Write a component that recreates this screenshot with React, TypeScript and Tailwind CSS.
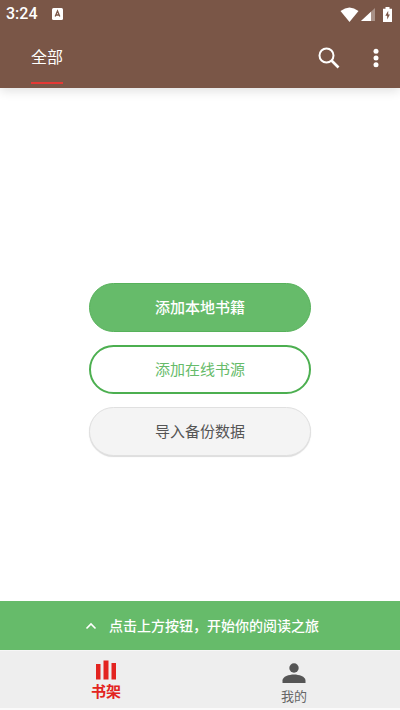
const actionCn =
  'h-[49px] w-full rounded-full pt-px text-[15px] leading-5 flex items-center justify-center cursor-pointer';

const StatusBar = () => {
  return (
    <div className="flex h-7 items-center justify-between pr-2 pl-[6px]">
      <div className="flex items-center gap-[14px]">
        <span className="font-['Roboto',sans-serif] text-base leading-5 font-medium">3:24</span>
        <svg width="11" height="12" viewBox="0 0 11 12" aria-hidden="true">
          <rect width="11" height="12" rx="1.5" fill="#fff" />
          <path d="M3.2 8.5 5.5 3 7.8 8.5M4.2 7h2.6" fill="none" stroke="#7a5647" strokeWidth="1.3" />
        </svg>
      </div>
      <div className="flex items-center">
        <svg width="19" height="15" viewBox="0 0 19 15" aria-hidden="true">
          <path d="M0.5 4Q9.5-3 18.5 4L9.5 15Z" fill="#fff" />
        </svg>
        <svg className="ml-[2px]" width="14" height="13" viewBox="0 0 14 13" aria-hidden="true">
          <path d="M0 13 14 0V13Z" fill="#fff" fillOpacity="0.35" />
          <path d="M0 13 10 3.7V13Z" fill="#fff" />
        </svg>
        <svg className="ml-2" width="9" height="15" viewBox="0 0 9 15" aria-hidden="true">
          <path d="M2.5 0h4v1.7H9V15H0V1.7h2.5Z" fill="#fff" />
          <path d="M5.2 3.7 2.3 8.8h1.9V12.6L6.9 7.5H5.2Z" fill="#7a5647" />
        </svg>
      </div>
    </div>
  );
};

const TopBar = () => {
  return (
    <div className="flex h-15 items-stretch justify-between pr-[14px] pl-[31px]">
      <button
        type="button"
        className="flex cursor-pointer flex-col justify-between pt-5 pb-1 text-base leading-5"
      >
        全部
        <span className="h-[2px] w-full bg-[#e53935]" />
      </button>
      <div className="flex items-center gap-[26px]">
        <button type="button" aria-label="搜索" className="cursor-pointer">
          <svg width="22" height="22" viewBox="0 0 22 22" fill="none" stroke="#fff">
            <circle cx="8.5" cy="8.5" r="7" strokeWidth="2" />
            <path d="m13.5 13.5 7 7" strokeWidth="2.6" />
          </svg>
        </button>
        <button type="button" aria-label="更多" className="flex w-5 cursor-pointer justify-center">
          <svg width="6" height="20" viewBox="0 0 6 20" fill="#fff">
            <circle cx="3" cy="3.3" r="2.5" />
            <circle cx="3" cy="10" r="2.5" />
            <circle cx="3" cy="16.7" r="2.5" />
          </svg>
        </button>
      </div>
    </div>
  );
};

const BottomNav = () => {
  return (
    <nav className="flex h-15 border-t border-b-2 border-t-[#f6f6f6] border-b-[#fafafa] bg-[#eeeeee]">
      <button
        type="button"
        className="flex flex-1 cursor-pointer flex-col items-center pt-[9px] pl-3 text-[#e32420]"
      >
        <svg width="22" height="20" viewBox="0 0 22 20" fill="currentColor" aria-hidden="true">
          <path d="M1 4h4.5v15.5H1ZM8.5.5H13.500v19H8.5ZM16.5 3H21v16.5h-4.5Z" />
        </svg>
        <span className="mt-[2px] text-[15px] leading-5 font-bold">书架</span>
      </button>
      <button
        type="button"
        className="flex flex-1 cursor-pointer flex-col items-center pt-3 pr-3 text-[#555555]"
      >
        <svg width="24" height="20" viewBox="0 0 24 20" fill="currentColor" aria-hidden="true">
          <circle cx="12" cy="5" r="4.7" />
          <path d="M.5 20v-2.5C.5 13.5 7 11.5 12 11.5s11.5 2 11.5 6V20Z" />
        </svg>
        <span className="mt-1 text-[13px] leading-5 text-[#666666]">我的</span>
      </button>
    </nav>
  );
};

const App = () => {
  return (
    <div className="flex min-h-screen flex-col bg-white font-['Roboto','Noto_Sans_CJK_SC',sans-serif]">
      <header className="bg-[#7a5647] text-white shadow-[0_3px_10px_rgba(0,0,0,0.12)]">
        <StatusBar />
        <TopBar />
      </header>
      <main className="flex flex-1 flex-col items-center justify-center pt-[50px]">
        <div className="flex w-5/9 flex-col gap-[13px]">
          <button
            type="button"
            className={`${actionCn} border border-[#57b25b] bg-[#66bb6a] font-medium text-white`}
          >
            添加本地书籍
          </button>
          <button
            type="button"
            className={`${actionCn} border-2 border-[#4caf50] bg-white text-[#66bb6a]`}
          >
            添加在线书源
          </button>
          <button
            type="button"
            className={`${actionCn} border border-[#e0e0e0] bg-[#f4f4f4] text-[#555555] shadow-[0_1px_1px_rgba(0,0,0,0.14)]`}
          >
            导入备份数据
          </button>
        </div>
      </main>
      <div className="flex h-[49px] items-center justify-center gap-3 bg-[#66bb6a] pl-1 text-sm leading-5 font-medium text-white">
        <svg width="12" height="8" viewBox="0 0 12 8" fill="none" stroke="#fff" strokeWidth="1.6" aria-hidden="true">
          <path d="m1.5 6.5 4.5-4.5 4.5 4.5" />
        </svg>
        <p>点击上方按钮，开始你的阅读之旅</p>
      </div>
      <BottomNav />
    </div>
  );
};

export default App;
